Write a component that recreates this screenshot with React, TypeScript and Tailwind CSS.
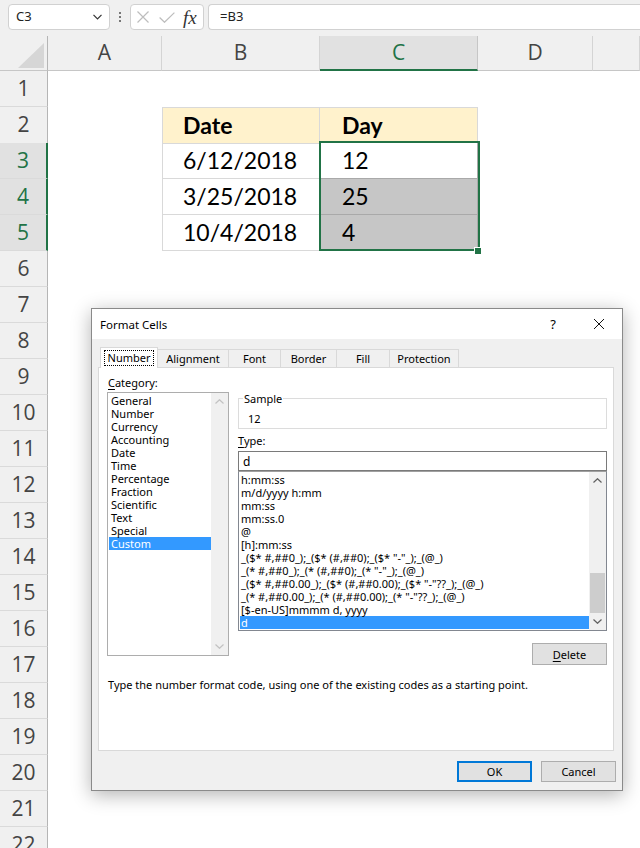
import React from "react";

const categories = [
  "General",
  "Number",
  "Currency",
  "Accounting",
  "Date",
  "Time",
  "Percentage",
  "Fraction",
  "Scientific",
  "Text",
  "Special",
  "Custom",
];

const formats = [
  "h:mm:ss",
  "m/d/yyyy h:mm",
  "mm:ss",
  "mm:ss.0",
  "@",
  "[h]:mm:ss",
  '_($* #,##0_);_($* (#,##0);_($* "-"_);_(@_)',
  '_(* #,##0_);_(* (#,##0);_(* "-"_);_(@_)',
  '_($* #,##0.00_);_($* (#,##0.00);_($* "-"??_);_(@_)',
  '_(* #,##0.00_);_(* (#,##0.00);_(* "-"??_);_(@_)',
  "[$-en-US]mmmm d, yyyy",
  "d",
];

const tabs = [
  { text: "Number", w: "w-[58px]" },
  { text: "Alignment", w: "w-[70px]" },
  { text: "Font", w: "w-[52px]" },
  { text: "Border", w: "w-[56px]" },
  { text: "Fill", w: "w-[53px]" },
  { text: "Protection", w: "w-[70px]" },
];

const columns = ["A", "B", "C", "D", ""];

const table: Record<number, [string, string]> = {
  2: ["Date", "Day"],
  3: ["6/12/2018", "12"],
  4: ["3/25/2018", "25"],
  5: ["10/4/2018", "4"],
};

const gridCols = "grid grid-cols-[48px_114px_158px_158px_115px_1fr]";

const Chevron = ({ up, color }: { up: boolean; color: string }) => (
  <svg width="9" height="5" viewBox="0 0 9 5">
    <path
      d={up ? "M0.5 4.5 L4.5 0.7 L8.5 4.5" : "M0.5 0.5 L4.5 4.3 L8.5 0.5"}
      fill="none"
      stroke={color}
      strokeWidth="1.2"
    />
  </svg>
);

const FormulaBar = () => (
  <div className="h-[36px] bg-[#f0f0f0] flex items-start pt-[4px] pl-[8px] font-['Noto_Sans',sans-serif] text-[13px] text-[#222]">
    <div className="w-[102px] h-[26px] bg-white border border-[#d1d1d1] rounded-[4px] flex items-center pl-[7px] pr-[7px]">
      <span>C3</span>
      <svg className="ml-auto" width="9" height="6" viewBox="0 0 9 6">
        <path d="M0.5 0.8 L4.5 4.8 L8.5 0.8" fill="none" stroke="#333" strokeWidth="1.2" />
      </svg>
    </div>
    <div className="w-[20px] h-[26px] flex flex-col items-center justify-center gap-[2px]">
      <span className="w-[2px] h-[2px] bg-[#777]" />
      <span className="w-[2px] h-[2px] bg-[#777]" />
      <span className="w-[2px] h-[2px] bg-[#777]" />
    </div>
    <div className="w-[74px] h-[26px] bg-white border border-[#d1d1d1] rounded-[4px] flex items-center pl-[6px]">
      <svg width="12" height="12" viewBox="0 0 12 12">
        <path d="M0.5 0.5 L11.5 11.5 M11.5 0.5 L0.5 11.5" stroke="#bdbdbd" strokeWidth="1.2" />
      </svg>
      <svg className="ml-[10px]" width="16" height="11" viewBox="0 0 16 11">
        <path d="M0.6 5.5 L5.5 10.3 L15.4 0.6" fill="none" stroke="#bdbdbd" strokeWidth="1.2" />
      </svg>
      <span className="ml-[8px] font-['Liberation_Serif',serif] italic text-[19px] leading-none text-[#333]">
        fx
      </span>
    </div>
    <div className="ml-[4px] flex-1 h-[26px] bg-white border border-r-0 border-[#d1d1d1] rounded-l-[4px] flex items-center pl-[11px]">
      =B3
    </div>
  </div>
);

const ColumnHeader = () => (
  <div className={`${gridCols} h-[35px] bg-[#f0f0f0] font-['Open_Sans',sans-serif] text-[21px] text-[#444]`}>
    <div className="border-r border-b border-r-[#b5b5b5] border-b-[#c6c6c6] flex items-end justify-end pr-[3px] pb-[2px]">
      <svg width="26" height="25" viewBox="0 0 26 25">
        <polygon points="26,0 26,25 0,25" fill="#d6d6d6" />
      </svg>
    </div>
    {columns.map((c) =>
      c === "C" ? (
        <div
          key={c}
          className="bg-[#e1e1e1] text-[#217346] border-r border-r-[#c6c6c6] border-b-2 border-b-[#217346] flex items-center justify-center"
        >
          {c}
        </div>
      ) : (
        <div
          key={c || "E"}
          className="border-r border-b border-r-[#d4d4d4] border-b-[#c6c6c6] flex items-center justify-center"
        >
          {c}
        </div>
      )
    )}
  </div>
);

const SheetBody = () => (
  <div className="relative">
    {Array.from({ length: 22 }, (_, i) => i + 1).map((r) => {
      const selected = r >= 3 && r <= 5;
      const data = table[r];
      return (
        <div key={r} className={`${gridCols} h-[36px]`}>
          <div
            className={`flex items-center justify-center border-b border-b-[#dadada] font-['Open_Sans',sans-serif] text-[21px] ${
              selected
                ? "bg-[#e1e1e1] text-[#217346] border-r-2 border-r-[#217346]"
                : "bg-[#f0f0f0] text-[#444] border-r border-r-[#b5b5b5]"
            }`}
          >
            {r}
          </div>
          <div />
          {data ? (
            <>
              <div
                className={`flex items-center pl-[20px] border-l border-r border-b border-[#d9d9d9] font-['Lato',sans-serif] text-[23px] text-black ${
                  r === 2 ? "border-t bg-[#fff2cc] font-bold" : ""
                }`}
              >
                {data[0]}
              </div>
              <div
                className={`flex items-center pl-[22px] border-r border-b font-['Lato',sans-serif] text-[23px] text-black ${
                  r === 2
                    ? "border-t border-[#d9d9d9] bg-[#fff2cc] font-bold"
                    : r === 3
                    ? "border-[#a9a9a9] bg-white"
                    : "border-[#a9a9a9] bg-[#c6c6c6]"
                }`}
              >
                {data[1]}
              </div>
            </>
          ) : (
            <>
              <div />
              <div />
            </>
          )}
          <div />
          <div />
        </div>
      );
    })}
    <div className="absolute left-[319px] top-[70px] w-[161px] h-[110px] border-2 border-[#217346]" />
    <div className="absolute left-[474px] top-[176px] w-[8px] h-[8px] bg-[#217346] border border-white" />
  </div>
);

const Dialog = () => (
  <div className="absolute left-[91px] top-[308px] w-[532px] h-[483px] border border-[#8a8a8a] bg-[#f0f0f0] shadow-[0_4px_18px_rgba(0,0,0,0.3)] flex flex-col font-['Noto_Sans',sans-serif] text-[11px] leading-[15px] text-black">
    <div className="h-[30px] bg-white flex items-center shrink-0">
      <span className="pl-[8px] text-[11.5px]">Format Cells</span>
      <div className="ml-auto w-[46px] h-full flex items-center justify-center text-[13px]">?</div>
      <div className="w-[46px] h-full flex items-center justify-center">
        <svg width="10" height="10" viewBox="0 0 10 10">
          <path d="M0 0 L10 10 M10 0 L0 10" stroke="#111" strokeWidth="1" />
        </svg>
      </div>
    </div>

    <div className="flex items-end h-[20px] mt-[8px] ml-[8px] shrink-0">
      {tabs.map((t, i) =>
        i === 0 ? (
          <div
            key={t.text}
            className={`${t.w} h-[21px] -mb-px relative z-10 bg-white border-t border-l border-r border-[#d9d9d9] flex items-center justify-center`}
          >
            <span className="border border-dotted border-black px-[3px] leading-[14px]">{t.text}</span>
          </div>
        ) : (
          <div
            key={t.text}
            className={`${t.w} h-[18px] border-t border-[#d9d9d9] flex items-center justify-center ${
              i === tabs.length - 1 ? "border-r" : ""
            } ${i > 1 ? "border-l" : ""}`}
          >
            {t.text}
          </div>
        )
      )}
    </div>

    <div className="ml-[6px] w-[516px] h-[384px] border border-[#d9d9d9] bg-white flex flex-col shrink-0">
      <div className="flex items-start">
        <div className="ml-[8px] mt-[7px] flex flex-col">
          <div className="pl-[1px] h-[15px]">
            <span className="underline underline-offset-2">C</span>ategory:
          </div>
          <div className="mt-[2px] w-[122px] h-[264px] border border-[#adadad] flex">
            <div className="w-[103px] pt-[1px] pl-[1px]">
              {categories.map((c) => (
                <div
                  key={c}
                  className={`h-[13px] leading-[13px] pl-[2px] ${
                    c === "Custom" ? "bg-[#3399ff] text-white" : ""
                  }`}
                >
                  {c}
                </div>
              ))}
            </div>
            <div className="ml-auto w-[17px] bg-[#f0f0f0] flex flex-col justify-between">
              <div className="h-[17px] flex items-center justify-center">
                <Chevron up color="#c2c2c2" />
              </div>
              <div className="h-[17px] flex items-center justify-center">
                <Chevron up={false} color="#c2c2c2" />
              </div>
            </div>
          </div>
        </div>

        <div className="ml-[9px] mt-[23px] w-[369px] flex flex-col">
          <fieldset className="border border-[#dcdcdc] pl-[4px]">
            <legend className="px-[1px] leading-[15px]">Sample</legend>
            <div className="pt-[6px] pb-[3px] pl-[5px] leading-[13px]">12</div>
          </fieldset>
          <div className="mt-[4px] h-[15px]">
            <span className="underline underline-offset-2">T</span>ype:
          </div>
          <div className="mt-[3px] h-[20px] border border-[#7a7a7a] flex items-center pl-[4px] text-[12px]">
            d
          </div>
          <div className="h-[160px] border border-[#828790] border-t-[#a0a0a0] flex">
            <div className="flex-1 pt-[1px] pl-[1px]">
              {formats.map((f) => (
                <div
                  key={f}
                  className={`h-[13px] leading-[13px] pl-[1px] whitespace-pre ${
                    f === "d" ? "bg-[#3399ff] text-white" : ""
                  }`}
                >
                  {f}
                </div>
              ))}
            </div>
            <div className="w-[17px] bg-[#f0f0f0] flex flex-col">
              <div className="h-[17px] flex items-center justify-center">
                <Chevron up color="#606060" />
              </div>
              <div className="flex-1 flex flex-col justify-end">
                <div className="h-[40px] mx-[1px] bg-[#cdcdcd]" />
              </div>
              <div className="h-[17px] flex items-center justify-center">
                <Chevron up={false} color="#606060" />
              </div>
            </div>
          </div>
          <div className="self-end mt-[12px] w-[75px] h-[22px] border border-[#adadad] bg-[#e1e1e1] flex items-center justify-center">
            <span>
              <span className="underline underline-offset-2">D</span>elete
            </span>
          </div>
        </div>
      </div>
      <div className="ml-[9px] mt-[12px]">
        Type the number format code, using one of the existing codes as a starting point.
      </div>
    </div>

    <div className="flex justify-end gap-[9px] mt-[10px] pr-[6px]">
      <div className="w-[75px] h-[21px] border-2 border-[#0078d7] bg-[#e1e1e1] flex items-center justify-center">
        OK
      </div>
      <div className="w-[75px] h-[21px] border border-[#adadad] bg-[#e1e1e1] flex items-center justify-center">
        Cancel
      </div>
    </div>
  </div>
);

export default function App() {
  return (
    <div className="relative w-[640px] h-[848px] overflow-hidden bg-white">
      <FormulaBar />
      <ColumnHeader />
      <SheetBody />
      <Dialog />
    </div>
  );
}
